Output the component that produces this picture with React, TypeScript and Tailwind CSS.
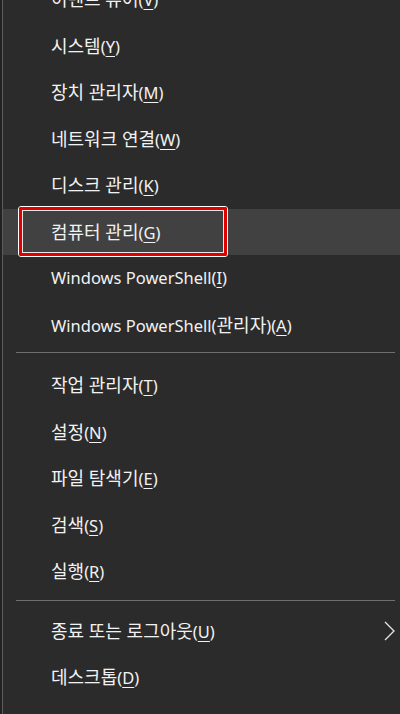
import React from "react";

type Item = { label: string; key: string; sub?: boolean; active?: boolean };

const groupA: Item[] = [
  { label: "이벤트 뷰어", key: "V" },
  { label: "시스템", key: "Y" },
  { label: "장치 관리자", key: "M" },
  { label: "네트워크 연결", key: "W" },
  { label: "디스크 관리", key: "K" },
  { label: "컴퓨터 관리", key: "G", active: true },
  { label: "Windows PowerShell", key: "I" },
  { label: "Windows PowerShell(관리자)", key: "A" },
];

const groupB: Item[] = [
  { label: "작업 관리자", key: "T" },
  { label: "설정", key: "N" },
  { label: "파일 탐색기", key: "E" },
  { label: "검색", key: "S" },
  { label: "실행", key: "R" },
];

const groupC: Item[] = [
  { label: "종료 또는 로그아웃", key: "U", sub: true },
  { label: "데스크톱", key: "D" },
];

// Korean glyphs render a bit larger than Latin in the original menu font
function Label({ text }: { text: string }) {
  const parts = text.split(/([가-힣 ]*[가-힣])/);
  return (
    <>
      {parts.map((p, i) =>
        /[가-힣]/.test(p) ? (
          <span key={i} className="text-[18px]">
            {p}
          </span>
        ) : (
          <React.Fragment key={i}>{p}</React.Fragment>
        )
      )}
    </>
  );
}

function Row({ item }: { item: Item }) {
  return (
    <div
      className={`relative flex h-[46.5px] items-center pl-[48px] pr-3 ${
        item.active ? "bg-[#414141]" : ""
      }`}
    >
      <span className="whitespace-nowrap text-[16.5px] leading-none text-[#f2f2f2]">
        <Label text={item.label} />(
        <span className="underline underline-offset-[3px]">{item.key}</span>)
      </span>
      {item.sub && (
        <svg
          className="absolute right-[5px] top-1/2 -translate-y-1/2"
          width="11"
          height="20"
          viewBox="0 0 11 20"
          fill="none"
        >
          <path d="M1 1l9 9-9 9" stroke="#e6e6e6" strokeWidth="1.3" />
        </svg>
      )}
      {item.active && (
        // highlight annotation box
        <div className="absolute left-[15px] top-[-3px] h-[51px] w-[210px] rounded-[3px] border border-white">
          <div className="h-full w-full rounded-[2px] border-[3px] border-[#e10000]">
            <div className="h-full w-full border border-[#e8e8e8]" />
          </div>
        </div>
      )}
    </div>
  );
}

function Separator({ top, bottom }: { top: string; bottom: string }) {
  return (
    <div className={`${top} ${bottom} pl-[13px] pr-[5px]`}>
      <div className="h-px bg-[#6e6e6e]" />
    </div>
  );
}

export default function App() {
  return (
    <div
      className="flex h-[714px] w-[400px] overflow-hidden bg-[#2b2b2b]"
      style={{ fontFamily: '"Noto Sans", "Noto Sans CJK KR", sans-serif' }}
    >
      <div className="w-[2px] bg-[#222]" />
      <div className="w-px bg-[#5c5c5c]" />
      <div className="flex-1 -mt-[24px]">
        {groupA.map((it) => (
          <Row key={it.key} item={it} />
        ))}
        <Separator top="pt-[4px]" bottom="pb-[9px]" />
        {groupB.map((it) => (
          <Row key={it.key} item={it} />
        ))}
        <Separator top="pt-[5px]" bottom="pb-[7px]" />
        {groupC.map((it) => (
          <Row key={it.key} item={it} />
        ))}
      </div>
    </div>
  );
}
